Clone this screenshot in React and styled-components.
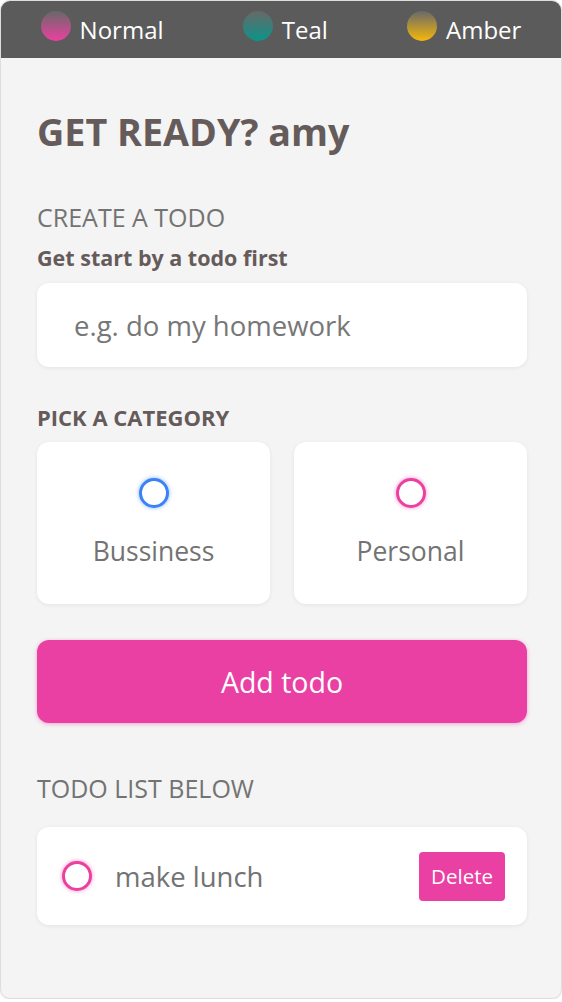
import React from "react";
import styled, { createGlobalStyle } from "styled-components";

const Global = createGlobalStyle`
  html, body { margin: 0; padding: 0; background: #ffffff; }
  body { font-family: "Open Sans", "Noto Sans", sans-serif; }
  * { box-sizing: border-box; }
`;

const Shell = styled.div`
  width: 562px;
  min-height: 999px;
  background: #f4f4f4;
  border: 1px solid #dedede;
  border-radius: 10px;
  overflow: hidden;
  box-shadow: 0 1px 2px rgba(0,0,0,0.08);
`;

const TopBar = styled.nav`
  height: 57px;
  background: #5b5b5b;
  display: flex;
  align-items: center;
  justify-content: space-around;
`;

const Theme = styled.div`
  display: flex;
  align-items: center;
  gap: 9px;
  color: #ffffff;
  font-size: 24px;
  line-height: 1;
`;

const Swatch = styled.span`
  width: 30px;
  height: 30px;
  border-radius: 50%;
  margin-top: -8px;
  background: linear-gradient(to bottom, rgba(105,105,105,0.95), ${(p) => p.$color});
`;

const Content = styled.main`
  padding: 52px 34px 72px 36px;
  display: flex;
  flex-direction: column;
`;

const Heading = styled.h1`
  margin: 0 0 48px;
  font-size: 37.7px;
  line-height: 44px;
  font-weight: 700;
  color: #665b5b;
`;

const SectionLabel = styled.h2`
  margin: 0 0 ${(p) => p.$gap || "12px"};
  font-size: 25px;
  line-height: 30px;
  font-weight: 400;
  color: #737373;
`;

const SubLabel = styled.h3`
  margin: 0 0 11px;
  font-size: ${(p) => p.$size || "21.5px"};
  line-height: 28px;
  font-weight: 700;
  color: #665b5b;
`;

const Input = styled.input`
  width: 100%;
  height: 84px;
  border: none;
  outline: none;
  border-radius: 12px;
  background: #ffffff;
  box-shadow: 0 1px 4px rgba(0,0,0,0.07);
  padding: 0 37px;
  font-family: inherit;
  font-size: 27.5px;
  color: #555;
  margin-bottom: 36px;
  &::placeholder { color: #777777; }
`;

const Categories = styled.div`
  display: grid;
  grid-template-columns: 1fr 1fr;
  gap: 24px;
  margin-bottom: 36px;
`;

const CategoryCard = styled.label`
  height: 162px;
  background: #ffffff;
  border-radius: 12px;
  box-shadow: 0 1px 4px rgba(0,0,0,0.07);
  display: flex;
  flex-direction: column;
  align-items: center;
  padding-top: 36px;
  gap: 26px;
  color: #737373;
  font-size: 26.5px;
  line-height: 34px;
`;

const Bubble = styled.span`
  display: block;
  flex: none;
  width: 30px;
  height: 30px;
  border-radius: 50%;
  border: 3px solid ${(p) => p.$color};
  box-shadow: 0 0 4px ${(p) => p.$glow};
  background: #ffffff;
`;

const AddButton = styled.button`
  width: 100%;
  height: 83px;
  border: none;
  border-radius: 12px;
  background: #ea40a4;
  color: #ffffff;
  font-family: inherit;
  font-size: 28.5px;
  box-shadow: 0 1px 4px rgba(234,64,164,0.45);
  margin-bottom: 50px;
`;

const TodoItem = styled.div`
  height: 98px;
  background: #ffffff;
  border-radius: 12px;
  box-shadow: 0 1px 4px rgba(0,0,0,0.07);
  display: flex;
  align-items: center;
  padding: 0 22px 0 25px;
`;

const TodoText = styled.span`
  flex: 1;
  margin-left: 23px;
  font-size: 27.5px;
  color: #737373;
`;

const DeleteButton = styled.button`
  height: 49px;
  padding: 0 12px;
  border: none;
  border-radius: 4px;
  background: #ea40a4;
  color: #ffffff;
  font-family: inherit;
  font-size: 20.5px;
`;

export default function App() {
  return (
    <>
      <Global />
      <Shell>
        <TopBar>
          <Theme><Swatch $color="#ec40a0" />Normal</Theme>
          <Theme><Swatch $color="#0b9488" />Teal</Theme>
          <Theme><Swatch $color="#f5b80a" />Amber</Theme>
        </TopBar>
        <Content>
          <Heading>GET READY? amy</Heading>
          <SectionLabel>CREATE A TODO</SectionLabel>
          <SubLabel>Get start by a todo first</SubLabel>
          <Input placeholder="e.g. do my homework" />
          <SubLabel $size="22px">PICK A CATEGORY</SubLabel>
          <Categories>
            <CategoryCard>
              <Bubble $color="#3b82f6" $glow="rgba(59,130,246,0.6)" />
              Bussiness
            </CategoryCard>
            <CategoryCard>
              <Bubble $color="#ec40a0" $glow="rgba(236,64,160,0.6)" />
              Personal
            </CategoryCard>
          </Categories>
          <AddButton>Add todo</AddButton>
          <SectionLabel $gap="24px">TODO LIST BELOW</SectionLabel>
          <TodoItem>
            <Bubble $color="#ec40a0" $glow="rgba(236,64,160,0.6)" />
            <TodoText>make lunch</TodoText>
            <DeleteButton>Delete</DeleteButton>
          </TodoItem>
        </Content>
      </Shell>
    </>
  );
}
